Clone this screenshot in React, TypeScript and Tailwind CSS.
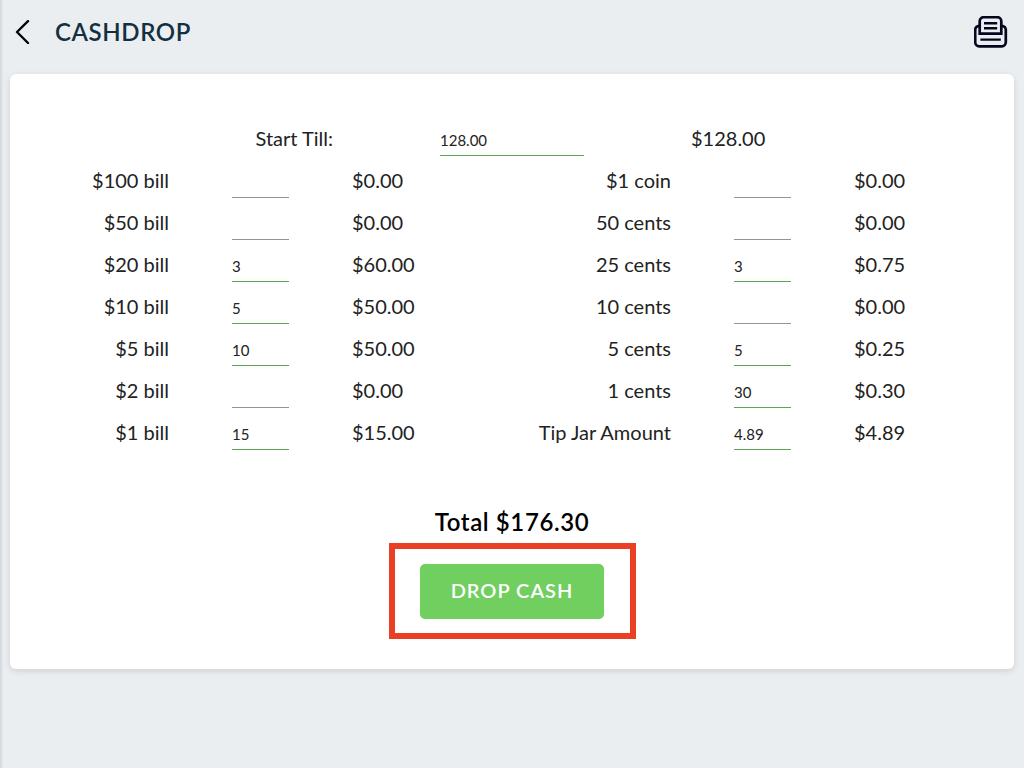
import { useState } from "react";

type Line = { label: string; unit: number; count: string };

const BILLS: Line[] = [
  { label: "$100 bill", unit: 100, count: "" },
  { label: "$50 bill", unit: 50, count: "" },
  { label: "$20 bill", unit: 20, count: "3" },
  { label: "$10 bill", unit: 10, count: "5" },
  { label: "$5 bill", unit: 5, count: "10" },
  { label: "$2 bill", unit: 2, count: "" },
  { label: "$1 bill", unit: 1, count: "15" },
];

const COINS: Line[] = [
  { label: "$1 coin", unit: 1, count: "" },
  { label: "50 cents", unit: 0.5, count: "" },
  { label: "25 cents", unit: 0.25, count: "3" },
  { label: "10 cents", unit: 0.1, count: "" },
  { label: "5 cents", unit: 0.05, count: "5" },
  { label: "1 cents", unit: 0.01, count: "30" },
  { label: "Tip Jar Amount", unit: 1, count: "4.89" },
];

const money = (n: number) => `$${n.toFixed(2)}`;
const amount = (line: Line) => (Number(line.count) || 0) * line.unit;

function AmountInput({ id, value, onChange }: { id: string; value: string; onChange: (v: string) => void }) {
  return (
    <input
      id={id}
      type="text"
      inputMode="decimal"
      placeholder=" "
      value={value}
      onChange={(e) => onChange(e.target.value)}
      className="mt-1.5 h-[30px] w-full min-w-0 border-b border-[#5aa854] bg-transparent pb-0.5 text-[15px] outline-none placeholder-shown:border-[#949494]"
    />
  );
}

function LineColumn({ name, lines, onChange }: { name: string; lines: Line[]; onChange: (lines: Line[]) => void }) {
  return (
    <div className="flex-1">
      {lines.map((line, i) => {
        const id = `${name}-${i}`;
        return (
          <div key={id} className="grid h-[42px] grid-cols-[159fr_57fr_160fr] items-center gap-[63px] pb-0.5">
            <label htmlFor={id} className="justify-self-end whitespace-nowrap">
              {line.label}
            </label>
            <AmountInput
              id={id}
              value={line.count}
              onChange={(count) => onChange(lines.map((l, j) => (j === i ? { ...l, count } : l)))}
            />
            <output htmlFor={id}>{money(amount(line))}</output>
          </div>
        );
      })}
    </div>
  );
}

export default function App() {
  const [till, setTill] = useState("128.00");
  const [bills, setBills] = useState(BILLS);
  const [coins, setCoins] = useState(COINS);
  const total = [...bills, ...coins].reduce((sum, line) => sum + amount(line), 0);
  // The tip jar is counted but stays separate from the drawer total.
  const drawer = total - amount(coins[6]);

  return (
    <div className="min-h-screen bg-[#eaeef1] font-['Lato',sans-serif] text-xl text-[#222222] shadow-[inset_4px_0_2px_-2px_#d5d9dc]">
      <header className="flex h-[74px] items-start justify-between pt-4 pr-4 pl-3">
        <div className="flex h-8 items-center gap-[19px]">
          <button type="button" aria-label="Back" className="flex size-6 items-center justify-center">
            <svg
              viewBox="0 0 24 24"
              className="size-6"
              fill="none"
              stroke="#050505"
              strokeWidth="2.4"
              strokeLinecap="round"
              strokeLinejoin="round"
            >
              <path d="M16 1.2 5 12l11 11" />
            </svg>
          </button>
          <h1 className="font-['Lato_Semibold','Lato',sans-serif] text-2xl font-semibold tracking-wide text-[#12303f]">
            CASHDROP
          </h1>
        </div>
        <button type="button" aria-label="Print">
          <svg viewBox="0 0 34 34" className="size-[34px]" fill="none" stroke="#06071f" strokeWidth="2.7">
            <path d="M5.700 17.700V5.200a4 4 0 0 1 4-4h13.600a4 4 0 0 1 4 4v12.500z" />
            <path d="M5.700 9.800H5.200a4 4 0 0 0-4 4v12.500a4 4 0 0 0 4 4h22.600a4 4 0 0 0 4-4V13.800a4 4 0 0 0-4-4h-.5" />
            <path d="M10 7.200h13.200M10 12.300h13.200M6.400 23.600h20.400" strokeWidth="2.4" />
          </svg>
        </button>
      </header>

      <main className="mx-[10px] rounded-md bg-white pt-11 pb-[30px] shadow-[0_2px_6px_rgba(0,0,0,0.12)]">
        <div className="grid h-[42px] grid-cols-[1fr_144px_1fr] items-center gap-[107px] pb-0.5">
          <label htmlFor="till" className="justify-self-end">
            Start Till:
          </label>
          <AmountInput id="till" value={till} onChange={setTill} />
          <output htmlFor="till">{money(Number(till) || 0)}</output>
        </div>
        <div className="flex">
          <LineColumn name="bill" lines={bills} onChange={setBills} />
          <LineColumn name="coin" lines={coins} onChange={setCoins} />
        </div>
        <div className="mt-[52px] flex flex-col items-center gap-[5px]">
          <p className="font-['Lato_Semibold','Lato',sans-serif] text-2xl font-semibold tracking-wide text-black">
            Total {money(drawer)}
          </p>
          <div className="flex h-24 w-[247px] items-center justify-center border-6 border-[#e83f25]">
            <button
              type="button"
              className="h-[55px] w-[184px] rounded-[5px] bg-[#70cf5f] pb-0.5 font-['Lato_Semibold','Lato',sans-serif] font-semibold tracking-wider text-white"
            >
              DROP CASH
            </button>
          </div>
        </div>
      </main>
    </div>
  );
}
